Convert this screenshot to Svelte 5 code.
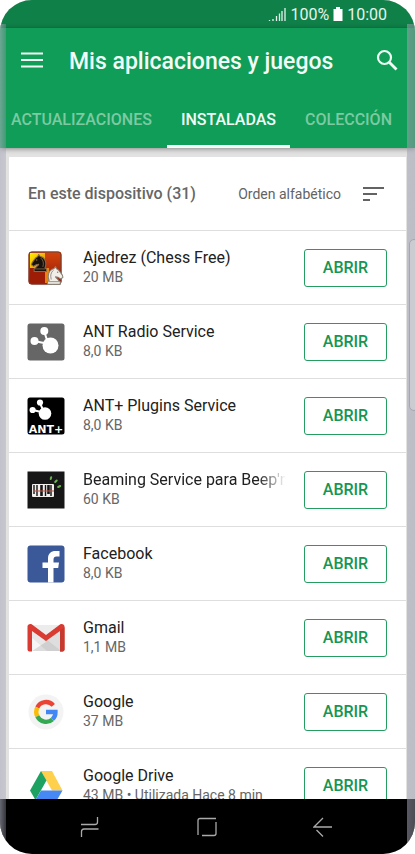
<script>
  const tabs = ['ACTUALIZACIONES', 'INSTALADAS', 'COLECCIÓN'];
  let active = $state('INSTALADAS');

  const apps = [
    { icon: 'chess', name: 'Ajedrez (Chess Free)', info: '20 MB' },
    { icon: 'ant', name: 'ANT Radio Service', info: '8,0 KB' },
    { icon: 'antplus', name: 'ANT+ Plugins Service', info: '8,0 KB' },
    { icon: 'beam', name: "Beaming Service para Beep'n", info: '60 KB' },
    { icon: 'facebook', name: 'Facebook', info: '8,0 KB' },
    { icon: 'gmail', name: 'Gmail', info: '1,1 MB' },
    { icon: 'google', name: 'Google', info: '37 MB' },
    { icon: 'drive', name: 'Google Drive', info: '43 MB • Utilizada Hace 8 min' }
  ];
</script>

{#snippet knight(fill, line)}
  <path d="M4 17H16V14.500L14.500 13.500C16.500 9 15 3.500 10 2.500L8.500 .5 7.500 2.500C5 3.500 4 6 2 8.500L1.500 10.500 3.500 12 6 10.500 8.500 10C8 11.500 6 12 5.500 13.500L4 14.500Z" fill={fill} stroke={line} stroke-width="1" stroke-linejoin="round" />
  <path d="M5 14.500H15M10.500 4C13 6 13.500 9 12.500 12.500" fill="none" stroke={line} stroke-width=".8" />
  <circle cx="6.500" cy="5.800" r=".7" fill={line} />
{/snippet}

{#snippet appIcon(kind)}
  <svg class="icon" viewBox="0 0 38 38" aria-hidden="true">
    {#if kind === 'chess'}
      <defs>
        <linearGradient id="gold" x1="0" y1="0" x2="1" y2="1"><stop offset="0" stop-color="#fff200" /><stop offset="1" stop-color="#e87b08" /></linearGradient>
        <linearGradient id="rust" x1="0" y1="0" x2="0" y2="1"><stop offset="0" stop-color="#d5450c" /><stop offset="1" stop-color="#8f1704" /></linearGradient>
      </defs>
      <rect x="1.500" y="2.500" width="33" height="33" rx="3" fill="url(#rust)" />
      <path d="M3 4H18V19H3Z" fill="url(#gold)" />
      <path d="M18 19H22V34H18Z" fill="#e9850e" />
      <path d="M3 19H18V34H3Z" fill="#9c1c05" />
      <rect x="2" y="3" width="32" height="32" rx="3" fill="none" stroke="#6c4034" />
      <g transform="translate(3 5) scale(1.030)">{@render knight('#17120e', '#8a6a48')}</g>
      <g transform="translate(37.500 17) scale(-1.060 1.080)">{@render knight('#f2efe8', '#8a8076')}</g>
    {:else if kind === 'ant'}
      <rect x=".5" y=".5" width="37" height="37" rx="2.500" fill="#666" />
      <path d="M17 8L20 17M7 18L17 20" stroke="#fff" stroke-width="2" />
      <circle cx="23.500" cy="22.500" r="8" fill="#fff" />
      <circle cx="17.300" cy="8" r="4" fill="#fff" />
      <circle cx="7.500" cy="18" r="4" fill="#fff" />
    {:else if kind === 'antplus'}
      <rect x=".5" y=".5" width="37" height="37" rx="2.500" fill="#000" />
      <path d="M13 6L16 13M6 13L14 15" stroke="#fff" stroke-width="2" />
      <circle cx="18" cy="16.500" r="6.300" fill="#fff" />
      <circle cx="13" cy="5.500" r="3.100" fill="#fff" />
      <circle cx="5.600" cy="13" r="3.100" fill="#fff" />
      <text x="19" y="35.500" text-anchor="middle" class="ant-label">ANT+</text>
    {:else if kind === 'beam'}
      <rect x=".5" y=".5" width="37" height="37" fill="#171717" />
      <rect x="5" y="13" width="22" height="13" rx="1" fill="#f2efed" />
      <path d="M7 14V23M10 14V25M18.500 14V25M24 14V25" stroke="#151515" stroke-width="1.400" />
      <path d="M14.500 14V25M21.500 14V23" stroke="#151515" stroke-width="2.600" />
      <path d="M6 20H27" stroke="#c8553e" stroke-width="1" />
      <path d="M23.700 8L24.200 6.200M28.200 11L29.700 9.500M31.200 16L33.200 15" stroke="#67b64b" stroke-width="2" stroke-linecap="round" />
    {:else if kind === 'facebook'}
      <rect x=".5" y=".5" width="37" height="37" rx="3" fill="#3b5998" />
      <path d="M21 37.500V23H15.500V17.500H21V13.500C21 8.500 24 6 28.500 6H32.500V11.500H29.500C27.500 11.500 26.500 12.500 26.500 14.500V17.500H32L31.200 23H26.500V37.500Z" fill="#fff" />
    {:else if kind === 'gmail'}
      <path d="M3 6H35V32H3Z" fill="#ececec" />
      <path d="M5 32L19 20 34 32Z" fill="#dcdcdc" />
      <path d="M5 10L19 23 5 32Z" fill="#f7f7f7" />
      <path d="M5 12L19 22 33 12V32H20L5 19Z" fill="#000" opacity=".06" />
      <path d="M.5 7.500C.5 5.500 3 4.300 5 5.500L19 16 33 5.500C35 4.300 37.500 5.500 37.500 7.500V30.500Q37.500 32.500 35.500 32.500H33V12L19 22 5 12V32.500H2.500Q.5 32.500 .5 30.500Z" fill="#d93a31" />
      <path d="M37.500 8V30.500Q37.500 32.500 35.500 32.500H33V12Z" fill="#c5392f" />
    {:else if kind === 'google'}
      <circle cx="19" cy="19" r="17.500" fill="#f3f3f3" />
      <g fill="none" stroke-width="4.300">
        <path d="M26.300 12.300A9.700 9.700 0 0 0 10.300 14.500" stroke="#ea4335" />
        <path d="M10.300 14.500A9.700 9.700 0 0 0 10.300 23.300" stroke="#fbbc05" />
        <path d="M10.300 23.300A9.700 9.700 0 0 0 25.500 26.300" stroke="#34a853" />
        <path d="M25.500 26.300A9.700 9.700 0 0 0 28.500 19H19" stroke="#4285f4" />
      </g>
    {:else}
      <path d="M14 4H25L35.500 23.500H25Z" fill="#ffd04b" />
      <path d="M14 4L19.500 13.500 8.500 33 3 23.500Z" fill="#1da261" />
      <path d="M14 23.500H35.500L30 33H8.500Z" fill="#4688f4" />
    {/if}
  </svg>
{/snippet}

<div class="phone">
  <div class="status">
    <svg width="18" height="16" viewBox="0 0 18 16" aria-hidden="true">
      <path d="M1.500 14V15M5 13V15M8.500 10V15M11.500 7.500V15M14 5V15M17 2V15" stroke="#e4f4eb" stroke-width="1.300" />
    </svg>
    <span>100%</span>
    <svg width="10" height="14" viewBox="0 0 10 14" aria-hidden="true"><path d="M3 0H7V2H9.500V14H.5V2H3Z" fill="#fff" /></svg>
    <span>10:00</span>
  </div>

  <header>
    <div class="bar">
      <button class="plain" aria-label="Menú">
        <svg width="22" height="16" viewBox="0 0 22 16"><path d="M0 1.500H22M0 8H22M0 14.500H22" stroke="#f0fbf5" stroke-width="2" /></svg>
      </button>
      <h1>Mis aplicaciones y juegos</h1>
      <button class="plain" aria-label="Buscar">
        <svg width="22" height="22" viewBox="0 0 22 22"><circle cx="8.500" cy="8.500" r="6.500" fill="none" stroke="#f0fbf5" stroke-width="2.200" /><path d="M13 13L20.500 20.500" stroke="#f0fbf5" stroke-width="2.800" /></svg>
      </button>
    </div>
    <nav class="tabs">
      {#each tabs as tab}
        <button class="tab" class:active={tab === active} onclick={() => (active = tab)}>{tab}</button>
      {/each}
    </nav>
  </header>

  <main>
    <section>
      <div class="sort">
        <h2>En este dispositivo (31)</h2>
        <button class="plain order">
          <span>Orden alfabético</span>
          <svg width="21" height="16" viewBox="0 0 21 16" aria-hidden="true"><path d="M0 2H21M0 8H14M0 14H7" stroke="#636363" stroke-width="2" /></svg>
        </button>
      </div>
      <ul>
        {#each apps as app}
          <li>
            {@render appIcon(app.icon)}
            <div class="text">
              <div class="name" class:fade={app.icon === 'beam'}>{app.name}</div>
              <div class="info">{app.info}</div>
            </div>
            <button class="open">ABRIR</button>
          </li>
        {/each}
      </ul>
    </section>
  </main>

  <footer>
    <button class="plain" aria-label="Recientes">
      <svg width="20" height="22" viewBox="0 0 20 22"><path d="M1 8.500H15Q17.500 8.500 17.500 6V1M18.500 13H4Q1.500 13 1.500 15.500V21" fill="none" stroke="#aaa" stroke-width="1.300" /></svg>
    </button>
    <button class="plain" aria-label="Inicio">
      <svg width="20" height="20" viewBox="0 0 20 20"><path d="M1 18V3.500Q1 1.500 3 1.500H19M19 5V16.500Q19 18.500 17 18.500H5" fill="none" stroke="#aaa" stroke-width="1.300" /></svg>
    </button>
    <button class="plain" aria-label="Atrás">
      <svg width="20" height="20" viewBox="0 0 20 20"><path d="M10 1L1 10H19M3.500 13L10 19.500" fill="none" stroke="#aaa" stroke-width="1.300" /></svg>
    </button>
  </footer>

  <div class="edge left"></div>
  <div class="edge right"></div>
  <div class="side-key"></div>
</div>

<style>
  :global(body) { background: #fff; }
  .phone {
    position: relative;
    display: flex;
    flex-direction: column;
    height: 100vh;
    overflow: hidden;
    border-radius: 32px;
    background: #e2e2e2;
    font-family: Roboto, sans-serif;
    color: #212121;
  }
  h1, h2, ul { margin: 0; padding: 0; }
  button { font-family: inherit; cursor: pointer; }
  svg { display: block; flex: none; }
  .plain { display: flex; align-items: center; padding: 0; border: 0; background: none; }
  .status {
    display: flex;
    align-items: center;
    justify-content: flex-end;
    gap: 4px;
    height: 28px;
    padding-right: 28px;
    background: #0f8048;
    color: #e4f4eb;
    font-size: 16px;
    flex: none;
  }
  header {
    position: relative;
    z-index: 1;
    flex: none;
    background: #109d58;
    box-shadow: 0 1px 5px rgba(0, 0, 0, .4);
  }
  .bar { display: flex; align-items: center; height: 64px; padding: 0 17px 0 21px; }
  h1 { flex: 1; margin-left: 26px; padding-top: 2px; color: #f3fcf7; font-size: 23px; font-weight: 500; }
  .tabs { display: flex; justify-content: space-between; height: 56px; padding: 0 9px 0 0; }
  .tab {
    padding: 2px 14px 0;
    border: 0;
    border-bottom: 3px solid transparent;
    background: none;
    color: #7dcaa2;
    font-size: 16px;
    font-weight: 500;
  }
  .tab:first-child { padding-left: 11px; }
  .tab.active { border-color: #f3fcf7; color: #f3fcf7; }
  main { flex: 1; min-height: 0; overflow: hidden; padding: 9px 9px 0; }
  section { background: #fff; }
  .sort { display: flex; align-items: center; justify-content: space-between; height: 73px; padding: 0 22px 0 19px; }
  h2 { color: #666; font-size: 16px; font-weight: 500; }
  .order { gap: 22px; color: #636363; font-size: 14px; }
  ul { list-style: none; }
  li {
    display: flex;
    align-items: center;
    box-sizing: border-box;
    height: 74px;
    padding: 0 19px 0 18px;
    border-top: 1px solid #dedede;
  }
  .icon { width: 38px; height: 38px; }
  .ant-label { font: 700 11px "DejaVu Sans", sans-serif; fill: #fff; }
  .text { flex: 1; min-width: 0; margin: 0 18px; white-space: nowrap; }
  .name { overflow: hidden; font-size: 16px; line-height: 20px; }
  .fade { mask-image: linear-gradient(to left, transparent, #000 28px); }
  .info { color: #666; font-size: 14px; line-height: 19px; }
  .open {
    width: 83px;
    height: 38px;
    padding: 0;
    border: 1px solid #259d61;
    border-radius: 3px;
    background: #fff;
    color: #159653;
    font-size: 16px;
    font-weight: 500;
  }
  footer {
    display: flex;
    align-items: center;
    justify-content: space-between;
    height: 55px;
    padding: 0 82px 0 80px;
    background: #000;
    flex: none;
  }
  .edge {
    position: absolute;
    z-index: 2;
    top: 24px;
    bottom: 0;
    width: 6px;
    background: linear-gradient(to right, rgba(170, 172, 188, .6), rgba(150, 152, 168, .35));
    pointer-events: none;
  }
  .left { left: 0; }
  .right { right: 0; width: 8px; background: linear-gradient(to right, rgba(160, 162, 178, .55), rgba(150, 152, 168, .5)); }
  .side-key {
    position: absolute;
    z-index: 3;
    top: 239px;
    right: -4px;
    width: 8px;
    height: 170px;
    border: 1px solid #a5a6ae;
    border-radius: 5px;
    background: #cbcbd2;
  }
</style>
